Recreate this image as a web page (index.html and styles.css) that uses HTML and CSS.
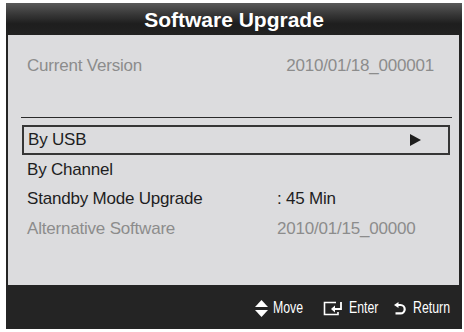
FILE: index.html
```html
<!DOCTYPE html>
<html>
<head>
<meta charset="utf-8">
<link rel="stylesheet" href="styles.css">
</head>
<body>
<div class="frame">
  <div class="title">Software Upgrade</div>
  <div class="panel">
    <div class="row version dim">
      <span>Current Version</span>
      <span>2010/01/18_000001</span>
    </div>
    <div class="rule"></div>
    <div class="row item selected">
      <span class="label">By USB</span>
      <svg class="arrow" width="11" height="12" viewBox="0 0 11 12"><polygon points="0,0 11,6 0,12" fill="#1e1e1e"/></svg>
    </div>
    <div class="row item">
      <span class="label">By Channel</span>
    </div>
    <div class="row item">
      <span class="label">Standby Mode Upgrade</span>
      <span class="value">: 45 Min</span>
    </div>
    <div class="row item dim">
      <span class="label">Alternative Software</span>
      <span class="value">2010/01/15_00000</span>
    </div>
  </div>
  <div class="footer">
    <div class="hint first">
      <svg width="13" height="17" viewBox="0 0 13 17"><polygon points="6.5,0 13,7 0,7" fill="#fff"/><polygon points="0,10 13,10 6.5,17" fill="#fff"/></svg>
      <span class="key move">Move</span>
    </div>
    <div class="hint">
      <svg width="21" height="15" viewBox="0 0 21 15"><path d="M13 1.5 H1.5 V13.5 H15 V11" fill="none" stroke="#fff" stroke-width="1.6"/><path d="M18 1 V8 H11" fill="none" stroke="#fff" stroke-width="1.8"/><polygon points="8,8 12,4.5 12,11.5" fill="#fff"/></svg>
      <span class="key enter">Enter</span>
    </div>
    <div class="hint ret">
      <svg width="12" height="13" viewBox="0 0 12 13"><path d="M3 3 H6.5 A4.2 4.2 0 0 1 6.5 11.4 H1.5" fill="none" stroke="#fff" stroke-width="2.2"/><polygon points="0,3 4.5,0 4.5,6" fill="#fff"/></svg>
      <span class="key return">Return</span>
    </div>
  </div>
</div>
</body>
</html>
```

FILE: styles.css
```css
html, body {
  margin: 0;
  padding: 0;
  background: #ffffff;
}

body {
  font-family: "Liberation Sans", Arial, sans-serif;
}

.frame {
  margin: 3px 0 0 6px;
  width: 456px;
  height: 326px;
  background: #242424;
  display: flex;
  flex-direction: column;
}

.title {
  height: 32px;
  line-height: 33px;
  text-align: center;
  color: #ffffff;
  font-weight: bold;
  font-size: 21px;
  background: linear-gradient(to bottom, #5a5a5a 0%, #3c3c3c 30%, #1e1e1e 65%, #222222 100%);
}

.panel {
  height: 250px;
  margin: 0 3px 0 2px;
  background: #dcdcde;
  padding-top: 19px;
  box-sizing: border-box;
  font-size: 17px;
  letter-spacing: -0.2px;
  color: #1e1e1e;
}

.row {
  display: flex;
  align-items: center;
  margin: 0 9px 0 14px;
  border: 2px solid transparent;
  padding-left: 3px;
}

.version {
  height: 20px;
  justify-content: space-between;
  padding-right: 14px;
}

.dim {
  color: #8c8c8c;
}

.rule {
  height: 1px;
  background: #2a2a2a;
  margin: 39px 7px 7px 13px;
}

.item {
  height: 30px;
  box-sizing: border-box;
}

.item:nth-child(4) {
  height: 29px;
}

.item .label {
  width: 250px;
  flex: none;
}

.selected {
  border-color: #363636;
  padding-left: 4px;
}

.arrow {
  margin-left: auto;
  margin-right: 27px;
}

.footer {
  flex: 1;
  display: flex;
  justify-content: flex-end;
  align-items: center;
  padding: 2px 12px 0 0;
  gap: 16px;
  color: #ffffff;
  font-size: 16px;
}

.hint {
  display: flex;
  align-items: center;
  gap: 5px;
}

.hint.first {
  margin-right: 4px;
}

.hint.ret {
  gap: 7px;
}

.key {
  display: inline-block;
  transform: scaleX(0.77);
  transform-origin: left center;
}

.move {
  margin-right: -9px;
}

.enter {
  margin-right: -9px;
}

.return {
  margin-right: -11px;
}
```
